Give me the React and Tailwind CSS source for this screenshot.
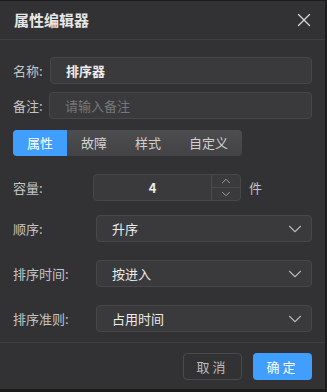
import { X, ChevronDown, ChevronUp } from 'lucide-react';

const font = { fontFamily: '"Noto Sans CJK SC", "Noto Sans", sans-serif' };

function Select({ value }) {
    return (
        <div className="flex h-[27px] flex-1 items-center justify-between rounded-[4px] border border-[#47474a] bg-[#3a3a3c] pl-[15px] pr-[5px]">
            <span className="text-[13px] text-[#ececec]">{value}</span>
            <ChevronDown className="h-[22px] w-[22px] text-[#b5b5b5]" strokeWidth={1.2} />
        </div>
    );
}

export default function App() {
    const tabs = ['属性', '故障', '样式', '自定义'];

    return (
        <div className="h-[392px] w-[327px] bg-[#1c1c1d] pt-px" style={font}>
            <div className="flex h-[388px] w-[325px] flex-col bg-[#323234]">
                {/* Header */}
                <div className="flex h-[39px] items-center justify-between border-b border-[#3f3f42] pl-[14px] pr-[10px]">
                    <span className="text-[15px] font-bold text-[#e6e6e6]">属性编辑器</span>
                    <X className="h-[22px] w-[22px] text-[#d8d8d8]" strokeWidth={1.4} />
                </div>

                {/* Body */}
                <div className="flex flex-1 flex-col px-[13px] pt-[17px]">
                    <div className="flex items-center">
                        <span className="w-[37px] text-[13px] text-[#c4c4c4]">名称:</span>
                        <div className="flex h-[27px] flex-1 items-center rounded-[4px] border border-[#47474a] bg-[#3a3a3c] pl-[15px]">
                            <span className="text-[13px] font-bold text-[#ececec]">排序器</span>
                        </div>
                    </div>
                    <div className="mt-[8px] flex items-center">
                        <span className="w-[36px] text-[13px] text-[#c4c4c4]">备注:</span>
                        <div className="flex h-[27px] flex-1 items-center rounded-[4px] border border-[#47474a] bg-[#3a3a3c] pl-[15px]">
                            <span className="text-[13px] text-[#77777a]">请输入备注</span>
                        </div>
                    </div>

                    {/* Tabs */}
                    <div className="mt-[11px] flex h-[26px] self-start overflow-hidden rounded-[4px] bg-gradient-to-b from-[#4d4d50] to-[#434346]">
                        {tabs.map((t, i) => (
                            <div
                                key={t}
                                className={`flex items-center justify-center px-[14px] text-[13px] ${
                                    i === 0 ? 'bg-[#409eff] text-white' : 'text-[#d0d0d0]'
                                }`}
                            >
                                {t}
                            </div>
                        ))}
                    </div>

                    {/* Capacity */}
                    <div className="mt-[18px] flex items-center">
                        <span className="w-[80px] text-[13px] text-[#c4c4c4]">容量:</span>
                        <div className="flex h-[27px] w-[148px] rounded-[4px] border border-[#47474a] bg-[#3a3a3c]">
                            <div className="flex flex-1 items-center justify-center text-[13px] font-bold text-[#ececec]">4</div>
                            <div className="flex w-[29px] flex-col border-l border-[#4a4a4d]">
                                <div className="flex flex-1 items-center justify-center overflow-hidden border-b border-[#4a4a4d]">
                                    <ChevronUp className="h-[14px] w-[14px] shrink-0 text-[#a8a8a8]" strokeWidth={1.6} />
                                </div>
                                <div className="flex flex-1 items-center justify-center overflow-hidden">
                                    <ChevronDown className="h-[14px] w-[14px] shrink-0 text-[#a8a8a8]" strokeWidth={1.6} />
                                </div>
                            </div>
                        </div>
                        <span className="ml-[8px] text-[13px] text-[#c4c4c4]">件</span>
                    </div>

                    <div className="mt-[14px] flex items-center">
                        <span className="w-[83px] text-[13px] text-[#c4c4c4]">顺序:</span>
                        <Select value="升序" />
                    </div>
                    <div className="mt-[18px] flex items-center">
                        <span className="w-[83px] text-[13px] text-[#c4c4c4]">排序时间:</span>
                        <Select value="按进入" />
                    </div>
                    <div className="mt-[18px] flex items-center">
                        <span className="w-[83px] text-[13px] text-[#c4c4c4]">排序准则:</span>
                        <Select value="占用时间" />
                    </div>
                </div>

                {/* Footer */}
                <div className="flex h-[47px] items-start justify-end gap-[11px] border-t border-[#3f3f42] pr-[13px] pt-[10px]">
                    <button className="flex h-[27px] w-[59px] items-center justify-center rounded-[4px] border border-[#4a4a4d] bg-[#323234] text-[13px] tracking-[3px] text-[#bdbdbd]">
                        取消
                    </button>
                    <button className="flex h-[27px] w-[59px] items-center justify-center rounded-[4px] bg-[#409eff] text-[13px] tracking-[3px] text-white">
                        确定
                    </button>
                </div>
            </div>
        </div>
    );
}
